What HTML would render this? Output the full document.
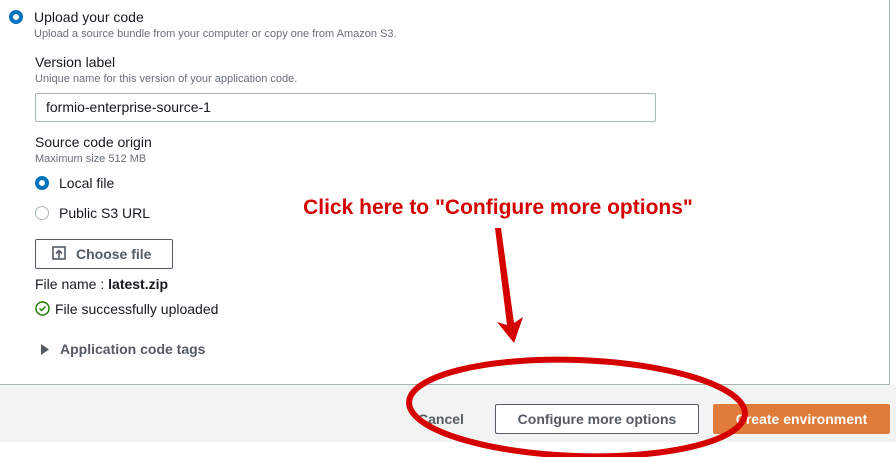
<!DOCTYPE html>
<html><head><meta charset="utf-8"><style>
*{margin:0;padding:0;box-sizing:border-box}
body{width:896px;height:457px;overflow:hidden;background:#fff;font-family:"Liberation Sans",sans-serif;color:#16191f;position:relative}
.a{position:absolute;white-space:nowrap}
.t{font-size:14px}
.s{font-size:11px;color:#687078}
.radio-on{position:absolute;width:14px;height:14px;border-radius:50%;border:4px solid #0073bb;background:#fff}
.radio-off{position:absolute;width:14px;height:14px;border-radius:50%;border:1px solid #aab7b8;background:#fff}
</style></head><body>
<div class="a" style="left:0;top:0;width:890px;height:385px;border-right:1px solid #aab7b8;border-bottom:1px solid #aab7b8"></div>
<div class="a" style="left:0;top:385px;width:896px;height:57px;background:#f2f3f3"></div>

<div class="radio-on" style="left:9px;top:10px"></div>
<div class="a t" style="left:34px;top:9px">Upload your code</div>
<div class="a s" style="left:34px;top:28px">Upload a source bundle from your computer or copy one from Amazon S3.</div>
<div class="a t" style="left:35px;top:54px">Version label</div>
<div class="a s" style="left:35px;top:73px">Unique name for this version of your application code.</div>
<div class="a" style="left:35px;top:93px;width:621px;height:29px;border:1px solid #aab7b8;border-radius:2px"></div>
<div class="a t" style="left:46px;top:99px">formio-enterprise-source-1</div>
<div class="a t" style="left:35px;top:134px">Source code origin</div>
<div class="a s" style="left:35px;top:153px">Maximum size 512 MB</div>
<div class="radio-on" style="left:35px;top:176px"></div>
<div class="a t" style="left:59px;top:175px">Local file</div>
<div class="radio-off" style="left:35px;top:206px"></div>
<div class="a t" style="left:59px;top:205px">Public S3 URL</div>
<div class="a" style="left:35px;top:239px;width:138px;height:30px;border:1px solid #545b64;border-radius:2px"></div>
<svg class="a" style="left:52px;top:246px" width="14" height="14" viewBox="0 0 14 14"><rect x="1" y="1" width="12" height="12" fill="none" stroke="#545b64" stroke-width="1.6"/><path d="M7 12V5M4 7.5L7 4.5L10 7.5" fill="none" stroke="#545b64" stroke-width="1.6"/></svg>
<div class="a t" style="left:76px;top:246px;font-weight:bold;color:#545b64">Choose file</div>
<div class="a t" style="left:35px;top:276px">File name : <b>latest.zip</b></div>
<svg class="a" style="left:35px;top:301px" width="15" height="15" viewBox="0 0 15 15"><circle cx="7.5" cy="7.5" r="6.5" fill="none" stroke="#1d8102" stroke-width="1.5"/><path d="M4.5 7.5l2 2 4-4" fill="none" stroke="#1d8102" stroke-width="1.5"/></svg>
<div class="a t" style="left:55px;top:301px">File successfully uploaded</div>
<svg class="a" style="left:41px;top:344px" width="9" height="11"><path d="M0 0L8 5.5L0 11Z" fill="#545b64"/></svg>
<div class="a t" style="left:60px;top:341px;font-weight:bold;color:#545b64">Application code tags</div>

<div class="a t" style="left:418px;top:411px;font-weight:bold;color:#545b64">Cancel</div>
<div class="a" style="left:495px;top:404px;width:204px;height:30px;border:1px solid #545b64;border-radius:2px;background:#fff;text-align:center;line-height:28px;font-size:14px;font-weight:bold;color:#545b64">Configure more options</div>
<div class="a" style="left:713px;top:404px;width:177px;height:30px;border-radius:2px;background:#e07b39;text-align:center;line-height:30px;font-size:14px;font-weight:bold;color:#fff">Create environment</div>

<svg class="a" style="left:0;top:0" width="896" height="457">
<ellipse cx="577" cy="408" rx="168" ry="48" transform="rotate(2 577 408)" fill="none" stroke="#d50000" stroke-width="6"/>
<path d="M495 228L501 228L514 323L523 317L514 343L497 322L507 325Z" fill="#d50000"/>
<text x="498" y="214" text-anchor="middle" font-family="Liberation Sans" font-weight="bold" font-size="21" fill="#d50000" stroke="#fff" stroke-width="3" paint-order="stroke">Click here to "Configure more options"</text>
</svg>
</body></html>
